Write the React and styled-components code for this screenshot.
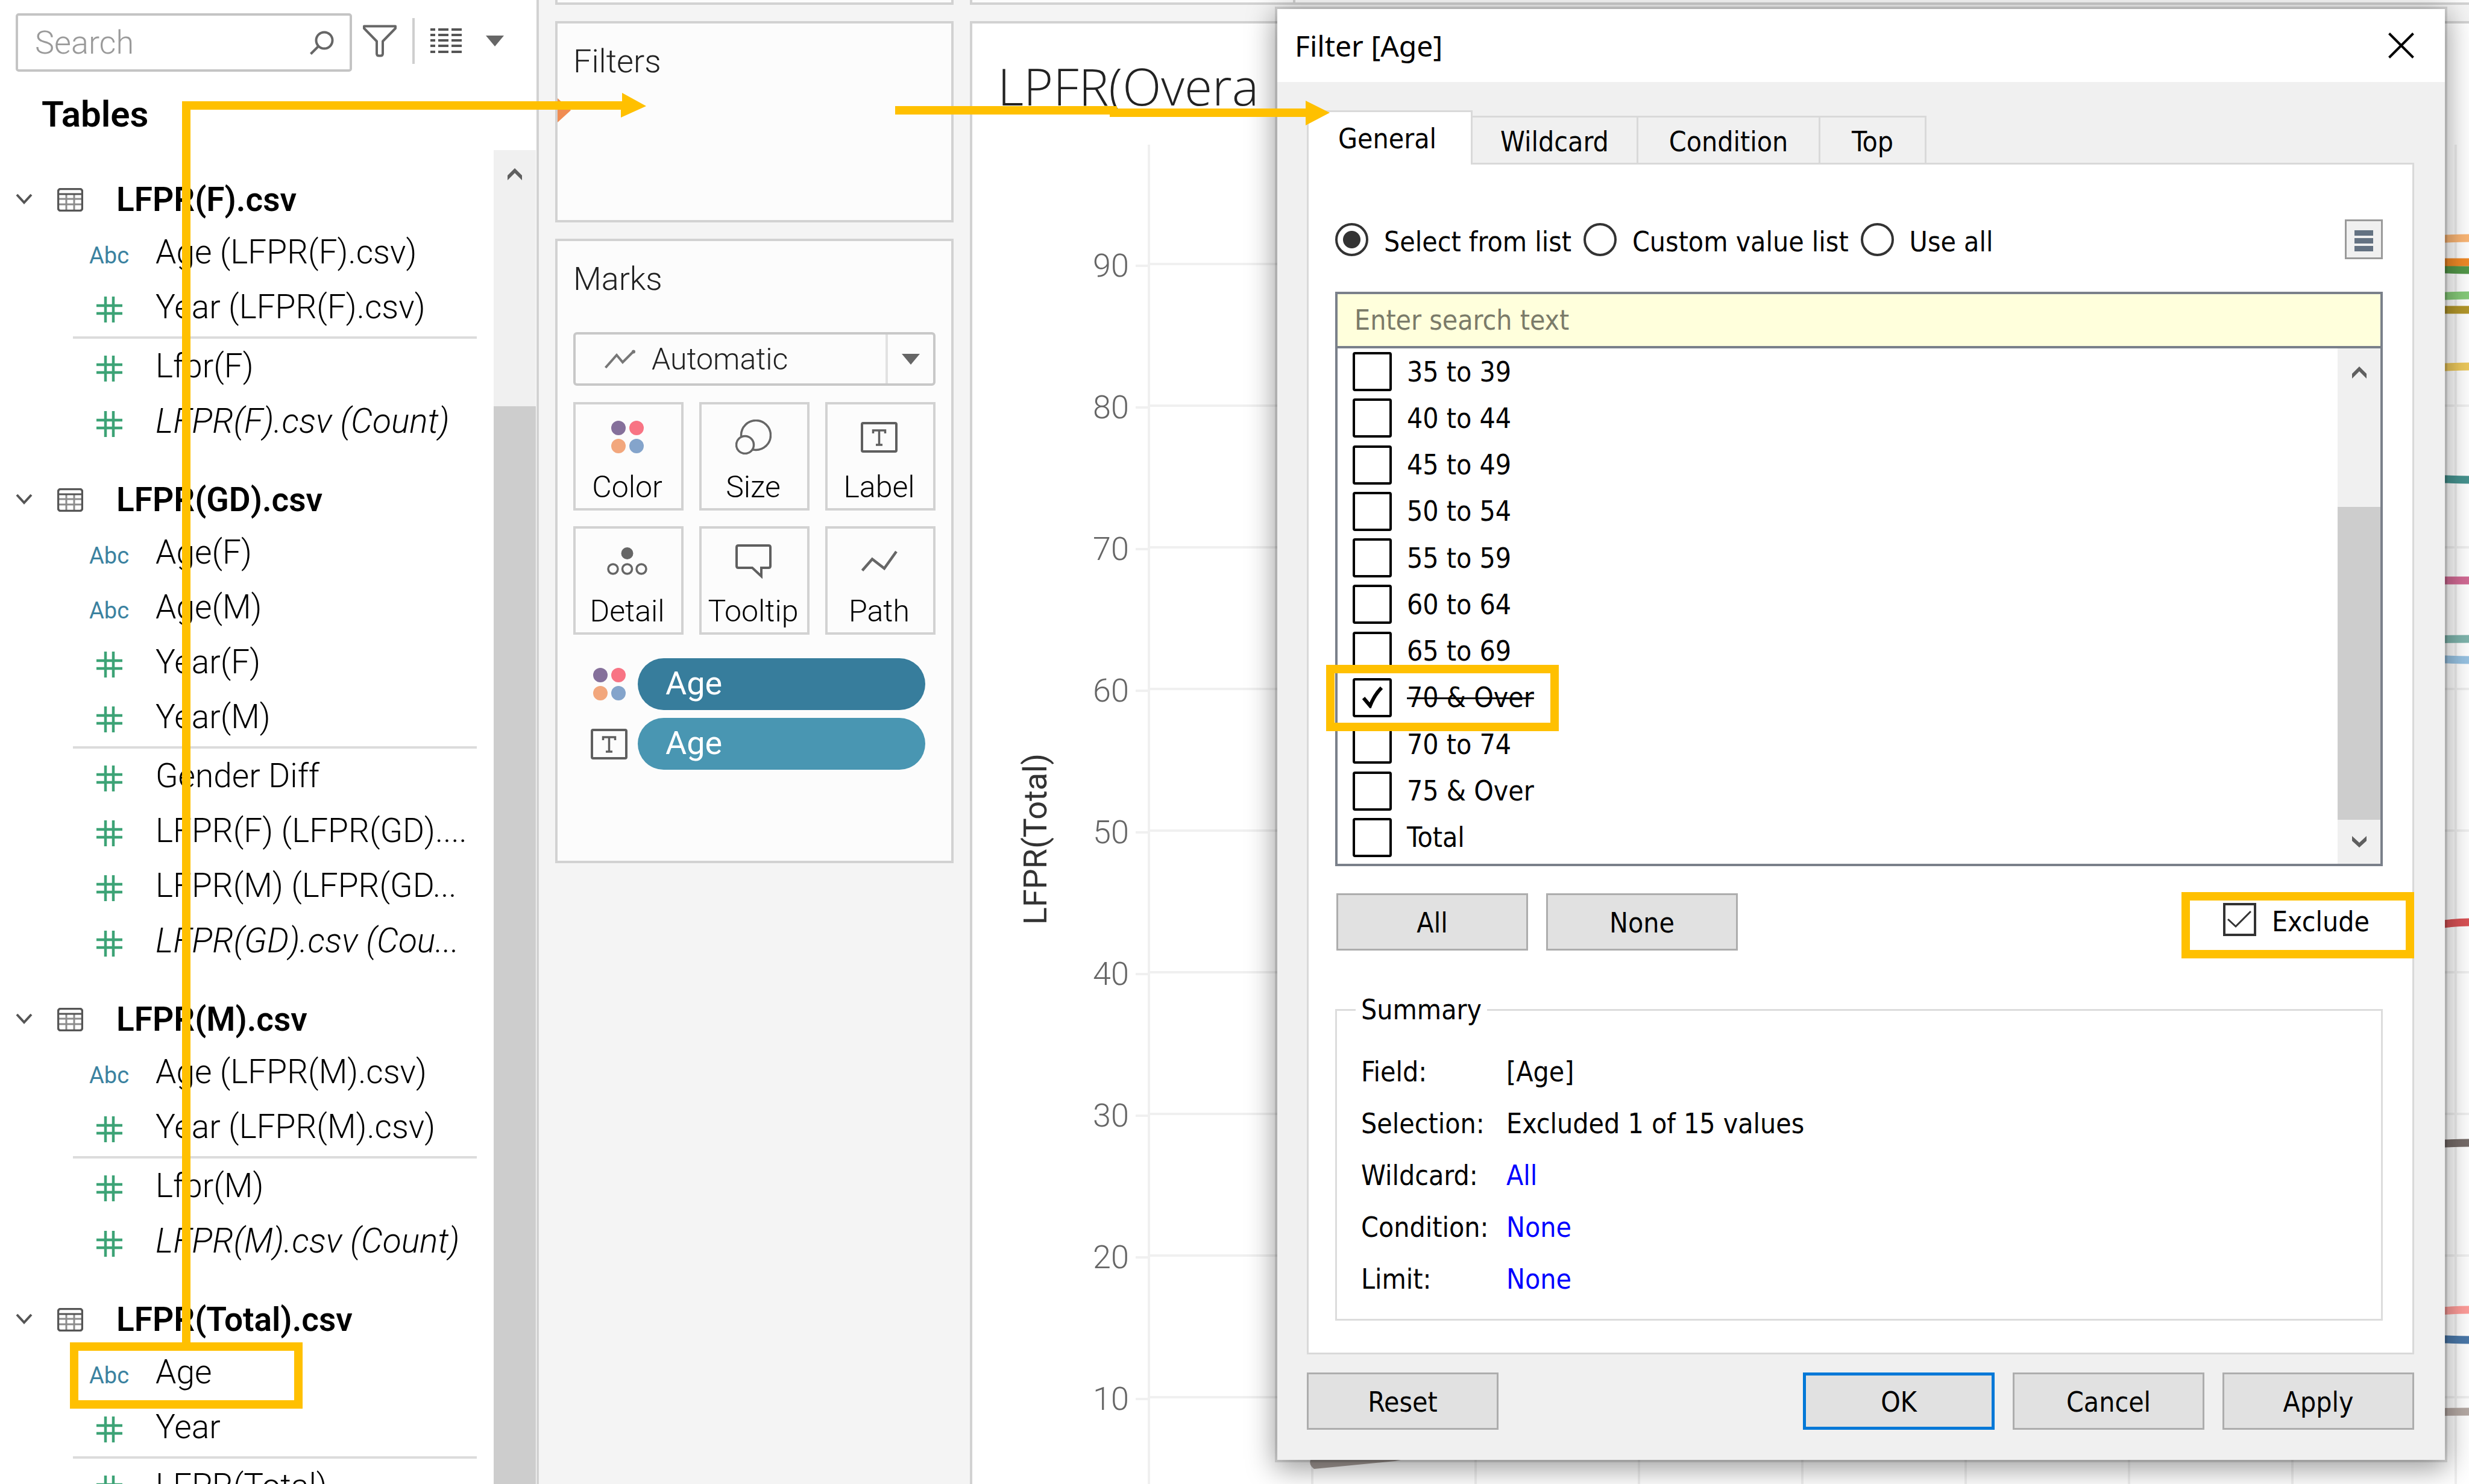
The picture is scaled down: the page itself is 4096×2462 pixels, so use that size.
import React from "react";
import styled, { createGlobalStyle, css } from "styled-components";

const ui = `Roboto, "Liberation Sans", sans-serif`;
const dialogFont = `"DejaVu Sans Condensed", "DejaVu Sans", sans-serif`;
const titleFont = `"Noto Sans", "Open Sans", sans-serif`;
const amber = "#ffc000";

const GlobalStyle = createGlobalStyle`
  *, *::before, *::after { box-sizing: border-box; }
  body { margin: 0; background: #f4f4f4; overflow: hidden; }
  button, input, select { font: inherit; color: inherit; margin: 0; }
`;

const Workspace = styled.div`
  position: relative;
  display: flex;
  height: 100vh;
  overflow: hidden;
  font-family: ${ui};
  font-weight: 300;
  color: #000;
`;

/* ---------- data pane ---------- */

const Sidebar = styled.aside`
  flex: 0 0 894px;
  min-width: 0;
  display: flex;
  flex-direction: column;
  background: #fff;
  border-right: 4px solid #d2d2d2;
`;

const Toolbar = styled.div`
  display: flex;
  align-items: flex-start;
  padding: 22px 0 0 26px;
`;

const SearchBox = styled.label`
  flex: 0 0 558px;
  min-width: 0;
  display: flex;
  align-items: center;
  height: 97px;
  padding: 0 26px 0 28px;
  border: 4px solid #c4c4c4;
  border-radius: 5px;
`;

const SearchInput = styled.input`
  flex: 1;
  width: 100%;
  min-width: 0;
  padding: 0;
  border: 0;
  outline: 0;
  background: none;
  font-size: 54px;
  &::placeholder { color: #9a9a9a; opacity: 1; }
`;

const ToolButton = styled.button`
  display: flex;
  align-items: center;
  height: 92px;
  padding: 0;
  margin-left: ${(p) => p.$gap}px;
  border: 0;
  background: none;
`;

const ToolDivider = styled.span`
  width: 4px;
  height: 76px;
  margin: 8px 0 0 25px;
  background: #cfcfcf;
`;

const PaneTitle = styled.h2`
  margin: 38px 0 26px 69px;
  font-size: 60px;
  line-height: 66px;
  font-weight: 600;
`;

const Scroller = styled.div`
  flex: 1;
  min-height: 0;
  display: flex;
  overflow: hidden;
`;

const Tree = styled.div`
  flex: 1;
  min-width: 0;
  padding-top: 40px;
`;

const Group = styled.section`
  margin-bottom: 43px;
`;

const GroupHead = styled.h3`
  display: flex;
  align-items: center;
  height: 84px;
  margin: 0;
  padding-left: 26px;
  font-size: 55px;
  font-weight: 600;
  white-space: nowrap;
`;

const GroupName = styled.span`
  margin-left: 55px;
`;

const FieldRow = styled.div`
  position: relative;
  display: flex;
  align-items: baseline;
  height: 91px;
  padding-left: 148px;
  font-size: ${(p) => (p.$italic ? 57 : 55)}px;
  line-height: 91px;
  white-space: nowrap;
  font-style: ${(p) => (p.$italic ? "italic" : "normal")};
`;

const FieldType = styled.span`
  flex: 0 0 66px;
  margin-right: 44px;
  text-align: center;
  font-size: 38px;
  font-style: normal;
  font-weight: 400;
  color: #3b82a0;
`;

const Rule = styled.hr`
  height: 4px;
  margin: 3px 28px 0 121px;
  border: 0;
  background: #dcdcdc;
`;

const ScrollTrack = styled.div`
  flex: 0 0 ${(p) => p.$w}px;
  display: flex;
  flex-direction: column;
  align-items: center;
  margin-right: ${(p) => p.$inset || 0}px;
  background: #f0f0f0;
`;

const ScrollArrow = styled.span`
  height: ${(p) => p.$h}px;
  display: flex;
  align-items: center;
`;

const ScrollThumb = styled.div`
  width: 100%;
  flex: 1;
  background: #cdcdcd;
`;

/* ---------- highlight frame ---------- */

const Highlight = styled.span`
  position: absolute;
  left: ${(p) => p.$l}px;
  top: ${(p) => p.$t}px;
  width: ${(p) => p.$w}px;
  height: 110px;
  border: 14px solid ${amber};
  pointer-events: none;
  z-index: 2;
`;

/* ---------- cards column ---------- */

const Shelves = styled.div`
  flex: 0 0 688px;
  display: flex;
  flex-direction: column;
  gap: 27px;
  padding-left: 27px;
`;

const Card = styled.section`
  position: relative;
  border: 4px solid #d2d2d2;
  background: #fcfcfc;
  padding: 30px 26px 0;
  height: ${(p) => p.$h}px;
`;

const CardEnd = styled.div`
  height: 8px;
  border: 4px solid #d2d2d2;
  border-top: 0;
  background: #fcfcfc;
`;

const CardTitle = styled.h2`
  margin: 0;
  font-size: 54px;
  line-height: 66px;
  font-weight: 300;
  color: #222;
`;

const DropMark = styled.span`
  position: absolute;
  left: 0;
  top: 124px;
  border-left: 22px solid #f08c52;
  border-top: 20px solid transparent;
  border-bottom: 20px solid transparent;
`;

const MarkSelectBox = styled.div`
  display: grid;
  align-items: center;
  height: 89px;
  margin: 55px 0 27px;
  border: 4px solid #c8c8c8;
  border-radius: 6px;
  color: #222;
  > * { grid-area: 1 / 1; }
  > svg { margin-left: 48px; pointer-events: none; }
`;

const MarkSelect = styled.select`
  appearance: none;
  width: 100%;
  height: 81px;
  padding: 0 0 0 126px;
  border: 0;
  outline: 0;
  background: none;
  font-size: 50px;
`;

const MarkCaret = styled.span`
  justify-self: end;
  display: flex;
  align-items: center;
  justify-content: center;
  width: 79px;
  height: 81px;
  border-left: 4px solid #e2e2e2;
  pointer-events: none;
`;

const MarkGrid = styled.div`
  display: grid;
  grid-template-columns: repeat(3, 1fr);
  gap: 26px;
`;

const MarkButton = styled.button`
  display: flex;
  flex-direction: column;
  align-items: center;
  gap: 21px;
  height: 180px;
  padding: 22px 4px 0 0;
  border: 4px solid #d2d2d2;
  background: #fcfcfc;
  font-size: 50px;
  line-height: 60px;
  font-weight: 300;
`;

const IconBox = styled.span`
  flex: 0 0 64px;
  display: flex;
  align-items: center;
  justify-content: center;
`;

const Pills = styled.div`
  display: grid;
  gap: 13px;
  margin: 39px 17px 0 29px;
`;

const PillRow = styled.div`
  display: flex;
  align-items: center;
  gap: 17px;
`;

const PillIcon = styled.span`
  flex: 0 0 61px;
  display: flex;
  justify-content: center;
`;

const Pill = styled.button`
  flex: 1;
  height: 86px;
  padding: 0 46px 4px;
  border: 0;
  border-radius: 43px;
  background: ${(p) => p.$bg};
  color: #fff;
  font-size: 54px;
  font-weight: 400;
  text-align: left;
`;

/* ---------- view ---------- */

const View = styled.main`
  flex: 1;
  min-width: 0;
  display: flex;
  flex-direction: column;
  gap: 27px;
  padding-left: 27px;
`;

const ShelfEnd = styled.div`
  height: 8px;
  padding-left: 532px;
  border: solid #d2d2d2;
  border-width: 0 0 4px 4px;
  background: #fcfcfc;
  &::before { content: ""; display: block; width: 4px; height: 4px; background: #d2d2d2; }
`;

const Sheet = styled.section`
  flex: 1;
  min-height: 0;
  display: flex;
  flex-direction: column;
  border: solid #d2d2d2;
  border-width: 4px 0 0 4px;
  background: #fff;
  overflow: hidden;
`;

const SheetTitle = styled.h1`
  margin: 54px 0 47px 42px;
  font-family: "Open Sans", "Noto Sans", sans-serif;
  font-size: 84px;
  line-height: 100px;
  font-weight: 300;
  color: #222;
  white-space: nowrap;
`;

const Plot = styled.div`
  flex: 1;
  min-height: 0;
  display: flex;
  align-items: flex-start;
`;

const AxisTitle = styled.div`
  flex: 0 0 64px;
  margin: 1010px 0 0 73px;
  writing-mode: vertical-rl;
  transform: rotate(180deg);
  font-size: 54px;
  line-height: 64px;
  font-weight: 400;
  color: #333;
  white-space: nowrap;
`;

const Ticks = styled.div`
  flex: 0 0 123px;
  padding-top: 83px;
`;

const Tick = styled.div`
  height: 235px;
  line-height: 235px;
  text-align: right;
  font-size: 54px;
  color: #666;
`;

const Canvas = styled.svg`
  flex: 1;
  min-width: 0;
  height: 100%;
  margin-left: 11px;
`;

/* ---------- dialog ---------- */

const Dialog = styled.div`
  position: absolute;
  left: 2119px;
  right: 40px;
  top: 15px;
  background: #f0f0f0;
  font-family: ${dialogFont};
  font-size: 46px;
  line-height: 54px;
  font-weight: 400;
  box-shadow: 0 0 0 4px rgba(0, 0, 0, 0.12), 0 10px 44px 4px rgba(0, 0, 0, 0.4);
`;

const TitleBar = styled.header`
  display: flex;
  align-items: center;
  justify-content: space-between;
  height: 121px;
  padding: 0 51px 0 29px;
  background: #fff;
  font-family: ${titleFont};
  font-size: 48px;
`;

const CloseButton = styled.button`
  display: flex;
  padding: 0;
  border: 0;
  background: none;
`;

const DialogBody = styled.div`
  padding: 47px 51px 50px 49px;
`;

const Tabs = styled.div`
  display: flex;
  align-items: flex-end;
`;

const Tab = styled.button`
  width: ${(p) => p.$w}px;
  height: 78px;
  padding: 4px 0 0;
  border: solid #d9d9d9;
  border-width: 3px 3px 0 0;
  background: #f0f0f0;
  ${(p) =>
    p.$active &&
    css`
      height: 90px;
      margin-bottom: -3px;
      padding: 0 8px 0 0;
      border-left-width: 3px;
      background: #fff;
      position: relative;
    `}
`;

const Panel = styled.div`
  padding: 91px 49px 53px 44px;
  border: 3px solid #d9d9d9;
  background: #fff;
`;

const ModeRow = styled.div`
  display: flex;
  align-items: center;
  gap: 20px;
  height: 66px;
  margin-bottom: 54px;
`;

const Choice = styled.label`
  position: relative;
  display: flex;
  align-items: center;
  gap: 26px;
  white-space: nowrap;
`;

const ChoiceText = styled.span`
  padding-top: 8px;
`;

const Radio = styled.input`
  appearance: none;
  width: 55px;
  height: 55px;
  border: 4px solid #333;
  border-radius: 50%;
  background: #fff;
  &:checked { background: radial-gradient(circle, #333 14px, #fff 15px); }
`;

const ListMenu = styled.button`
  display: flex;
  flex-direction: column;
  align-items: center;
  justify-content: center;
  gap: 4px;
  width: 63px;
  height: 66px;
  margin-left: auto;
  padding: 4px 0 0;
  border: 3px solid #9a9a9a;
  background: #f0f0f0;
`;

const MenuBar = styled.span`
  width: 31px;
  height: 9px;
  background: #647282;
`;

const ListBox = styled.div`
  border: 4px solid #7a808a;
`;

const ListSearch = styled.input`
  display: block;
  width: 100%;
  height: 90px;
  padding: 0 28px;
  border: 0;
  border-bottom: 4px solid #7a808a;
  outline: 0;
  background: #ffffdc;
  &::placeholder { color: #7b7b69; opacity: 1; }
`;

const ListBody = styled.div`
  display: flex;
  height: 855px;
`;

const Options = styled.div`
  flex: 1;
  display: flex;
  flex-direction: column;
  padding-bottom: 5px;
`;

const Option = styled.label`
  position: relative;
  flex: 1;
  display: flex;
  align-items: center;
  gap: 25px;
  padding-left: 25px;
  text-decoration: ${(p) => (p.$struck ? "line-through" : "none")};
  text-decoration-thickness: 3px;
`;

const CheckCell = styled.span`
  display: grid;
  place-items: center;
  > * { grid-area: 1 / 1; }
  > svg { pointer-events: none; }
`;

const Check = styled.input`
  appearance: none;
  width: ${(p) => p.$size}px;
  height: ${(p) => p.$size}px;
  border: 4px solid ${(p) => p.$color || "#000"};
  border-radius: ${(p) => (p.$square ? 0 : 4)}px;
  background: #fff;
`;

const ListActions = styled.div`
  display: flex;
  gap: 30px;
  margin: 45px 0 71px 2px;
`;

const PushButton = styled.button`
  width: 318px;
  height: 95px;
  padding: 2px 0 0;
  border: ${(p) => (p.$primary ? "5px solid #0078d7" : "3px solid #adadad")};
  background: #e1e1e1;
`;

const ExcludeSlot = styled.div`
  display: flex;
  align-items: center;
  height: 86px;
  margin: 0 22px 0 auto;
`;

const Summary = styled.fieldset`
  margin: 0;
  padding: 33px 40px 23px;
  border: 3px solid #dcdcdc;
`;

const Legend = styled.legend`
  margin-left: -9px;
  padding: 0 9px;
`;

const Facts = styled.dl`
  display: grid;
  grid-template-columns: 241px 1fr;
  grid-auto-rows: 86px;
  align-items: center;
  margin: 0;
`;

const Term = styled.dt`
  white-space: nowrap;
`;

const Detail = styled.dd`
  margin: 0;
  a { color: #00f; text-decoration: none; }
`;

const Footer = styled.footer`
  display: flex;
  gap: 30px;
  margin: 30px 0 0;
  > :first-child { margin-right: auto; }
`;

const Arrows = styled.svg`
  position: absolute;
  left: 0;
  top: 0;
  width: 2300px;
  height: 2240px;
  pointer-events: none;
`;

/* ---------- icons ---------- */

const Magnifier = () => (
  <svg width="40" height="40" viewBox="0 0 40 40" fill="none" stroke="#666" strokeWidth="4" style={{ flexShrink: 0 }}>
    <circle cx="24" cy="16" r="13.5" />
    <path d="M14.5 25.5 1.5 38.5" />
  </svg>
);
const Funnel = () => (
  <svg width="58" height="54" viewBox="0 0 58 54" fill="none" stroke="#666" strokeWidth="4" strokeLinejoin="round">
    <path d="M3 2.5H55V6L34 27.5V48Q34 51.500 30 51.500H28Q24 51.500 24 48V27.500L3 6Z" />
  </svg>
);
const ListGrid = () => (
  <svg width="52" height="42" viewBox="0 0 52 42" fill="#555">
    {[0, 9, 18, 27, 37].map((y) => (
      <path key={y} d={`M0 ${y}h8v4H0zM13 ${y}h17v4H13zM35 ${y}h17v4H35z`} />
    ))}
  </svg>
);
const Caret = () => (
  <svg width="30" height="18" viewBox="0 0 30 18"><path d="M0 0H30L15 18Z" fill="#666" /></svg>
);
const Chevron = () => (
  <svg width="28" height="20" viewBox="0 0 28 20" fill="none" stroke="#555" strokeWidth="4">
    <path d="M2 2 14 15 26 2" />
  </svg>
);
const ScrollChevron = ({ down }) => (
  <svg width="24" height="20" viewBox="0 0 24 20" fill="#5f5f5f">
    <path d={down ? "M0 0 12 11 24 0V8L12 19 0 8Z" : "M0 20 12 8 24 20V12L12 0 0 12Z"} />
  </svg>
);
const TableIcon = () => (
  <svg width="43" height="39" viewBox="0 0 43 39" fill="none" style={{ marginLeft: 41 }}>
    <path d="M3 18H40M3 27H40M15 11V36M28 11V36" stroke="#8c8c8c" strokeWidth="3" />
    <rect x="1.500" y="1.500" width="40" height="36" rx="4" stroke="#555" strokeWidth="3.500" />
    <path d="M2 10H41" stroke="#555" strokeWidth="3" />
  </svg>
);
const HashIcon = () => (
  <svg width="43" height="43" viewBox="0 0 43 43" stroke="#3da376" strokeWidth="4.500" style={{ verticalAlign: -7 }}>
    <path d="M15 0V43M28 0V43M0 15H43M0 28H43" />
  </svg>
);
const Dots = () => (
  <svg width="54" height="54" viewBox="0 0 54 54">
    <circle cx="12" cy="12" r="12" fill="#85709b" />
    <circle cx="42" cy="12" r="12" fill="#f87484" />
    <circle cx="12" cy="42" r="12" fill="#f2a77d" />
    <circle cx="42" cy="42" r="12" fill="#84a4cb" />
  </svg>
);
const SizeIcon = () => (
  <svg width="60" height="58" viewBox="0 0 60 58" fill="#fcfcfc" stroke="#666" strokeWidth="3.500">
    <circle cx="34" cy="26" r="24.500" />
    <circle cx="16" cy="42" r="14.500" />
  </svg>
);
const TextIcon = () => (
  <svg width="61" height="51" viewBox="0 0 61 51" fill="none" stroke="#5f5f5f">
    <rect x="2" y="2" width="57" height="47" rx="2" strokeWidth="4" />
    <path d="M20.500 19V14H40.500V19M30.500 14V38M25 38H36" strokeWidth="3.500" />
  </svg>
);
const DetailIcon = () => (
  <svg width="67" height="46" viewBox="0 0 67 46" fill="none" stroke="#666" strokeWidth="3.500">
    <circle cx="33.500" cy="10" r="10" fill="#666" stroke="none" />
    <circle cx="10" cy="36" r="8" />
    <circle cx="33.500" cy="36" r="8" />
    <circle cx="57" cy="36" r="8" />
  </svg>
);
const TooltipIcon = () => (
  <svg width="60" height="57" viewBox="0 0 60 57" fill="none" stroke="#5f5f5f" strokeWidth="4">
    <path d="M5 2H55Q58 2 58 5V36Q58 39 55 39H43V53L28 39H5Q2 39 2 36V5Q2 2 5 2Z" />
  </svg>
);
const PathIcon = () => (
  <svg width="60" height="36" viewBox="0 0 60 36" fill="none" stroke="#666" strokeWidth="4.500">
    <path d="M1.500 33.500 18 14.500 38 30 58 2" />
  </svg>
);
const LineIcon = () => (
  <svg width="52" height="32" viewBox="0 0 52 32" fill="none" stroke="#777" strokeWidth="4">
    <path d="M1.500 30 20 9 30 21 47 4" />
    <circle cx="48" cy="3.500" r="3" fill="#777" stroke="none" />
  </svg>
);
const BoldTick = () => (
  <svg width="34" height="36" viewBox="0 0 34 36" fill="none" stroke="#000" strokeWidth="6">
    <path d="M2 19 13 32Q20 14 32 2" />
  </svg>
);
const ThinTick = () => (
  <svg width="40" height="30" viewBox="0 0 40 30" fill="none" stroke="#333" strokeWidth="3">
    <path d="M1 15 14 27 39 2" />
  </svg>
);

/* ---------- data ---------- */

const tables = [
  { name: "LFPR(F).csv", dims: [["Age (LFPR(F).csv)", "abc"], ["Year (LFPR(F).csv)"]], measures: [["Lfpr(F)"], ["LFPR(F).csv (Count)", "count"]] },
  {
    name: "LFPR(GD).csv",
    dims: [["Age(F)", "abc"], ["Age(M)", "abc"], ["Year(F)"], ["Year(M)"]],
    measures: [["Gender Diff"], ["LFPR(F) (LFPR(GD)...."], ["LFPR(M) (LFPR(GD..."], ["LFPR(GD).csv (Cou...", "count"]],
  },
  { name: "LFPR(M).csv", dims: [["Age (LFPR(M).csv)", "abc"], ["Year (LFPR(M).csv)"]], measures: [["Lfpr(M)"], ["LFPR(M).csv (Count)", "count"]] },
  { name: "LFPR(Total).csv", dims: [["Age", "abc", true], ["Year"]], measures: [["LFPR(Total)"]] },
];

const marks = [
  ["Color", Dots], ["Size", SizeIcon], ["Label", TextIcon],
  ["Detail", DetailIcon], ["Tooltip", TooltipIcon], ["Path", PathIcon],
];

const ages = ["35 to 39", "40 to 44", "45 to 49", "50 to 54", "55 to 59", "60 to 64", "65 to 69", "70 & Over", "70 to 74", "75 & Over", "Total"];
const excluded = "70 & Over";

const series = [
  [157, "#fbb675", -2], [206, "#53984a", 2], [195, "#f18a27", 0], [252, "#86cb79", -2], [274, "#b3972a", 0],
  [370, "#edc95c", -2], [554, "#46938f", 2], [723, "#d26a94", 0], [821, "#7fb5ad", -1], [853, "#98c3e3", 2],
  [1295, "#d95255", -5], [1658, "#766c69", -2], [1936, "#ff9d9a", -3], [1981, "#4a78a9", 2], [2103, "#b5a9a4", -1],
];

const summary = [
  ["Field:", "[Age]"], ["Selection:", "Excluded 1 of 15 values"], ["Wildcard:", "All", true], ["Condition:", "None", true], ["Limit:", "None", true],
];

const Field = ({ field: [name, kind, marked] }) => (
  <FieldRow $italic={kind === "count"}>
    <FieldType>{kind === "abc" ? "Abc" : <HashIcon />}</FieldType>
    {name}
    {marked && <Highlight $l={116} $t={-4} $w={386} />}
  </FieldRow>
);

const DataPane = () => (
  <Sidebar>
    <Toolbar>
      <SearchBox>
        <SearchInput type="text" placeholder="Search" aria-label="Search" />
        <Magnifier />
      </SearchBox>
      <ToolButton aria-label="Filter fields" $gap={17}><Funnel /></ToolButton>
      <ToolDivider />
      <ToolButton aria-label="View as list" $gap={26}><ListGrid /></ToolButton>
      <ToolButton aria-label="Options" $gap={40}><Caret /></ToolButton>
    </Toolbar>
    <PaneTitle>Tables</PaneTitle>
    <Scroller>
      <Tree>
        {tables.map((t) => (
          <Group key={t.name}>
            <GroupHead><Chevron /><TableIcon /><GroupName>{t.name}</GroupName></GroupHead>
            {t.dims.map((f) => <Field key={f[0]} field={f} />)}
            <Rule />
            {t.measures.map((f) => <Field key={f[0]} field={f} />)}
          </Group>
        ))}
      </Tree>
      <ScrollTrack $w={70} $inset={1}>
        <ScrollArrow $h={79}><ScrollChevron /></ScrollArrow>
        <ScrollArrow $h={346} />
        <ScrollThumb />
      </ScrollTrack>
    </Scroller>
  </Sidebar>
);

const MarksColumn = () => (
  <Shelves>
    <CardEnd />
    <Card $h={334}>
      <CardTitle>Filters</CardTitle>
      <DropMark />
    </Card>
    <Card $h={1036}>
      <CardTitle>Marks</CardTitle>
      <MarkSelectBox>
        <LineIcon />
        <MarkSelect aria-label="Mark type" defaultValue="Automatic"><option>Automatic</option></MarkSelect>
        <MarkCaret><Caret /></MarkCaret>
      </MarkSelectBox>
      <MarkGrid>
        {marks.map(([label, Icon]) => (
          <MarkButton key={label}><IconBox><Icon /></IconBox>{label}</MarkButton>
        ))}
      </MarkGrid>
      <Pills>
        <PillRow><PillIcon><Dots /></PillIcon><Pill $bg="#377d9c">Age</Pill></PillRow>
        <PillRow><PillIcon><TextIcon /></PillIcon><Pill $bg="#4996b2">Age</Pill></PillRow>
      </Pills>
    </Card>
  </Shelves>
);

const Chart = () => (
  <View>
    <ShelfEnd />
    <Sheet>
      <SheetTitle>LPFR(Overa</SheetTitle>
      <Plot>
        <AxisTitle>LFPR(Total)</AxisTitle>
        <Ticks>
          {[90, 80, 70, 60, 50, 40, 30, 20, 10].map((v) => <Tick key={v}>{v}</Tick>)}
        </Ticks>
        <Canvas aria-hidden="true">
          <g stroke="#f0f0f0" strokeWidth="4">
            {Array.from({ length: 9 }, (_, i) => (
              <React.Fragment key={i}>
                <path d={`M0 ${201 + i * 235}H22`} />
                <path d={`M22 ${198 + i * 235}H2300`} />
              </React.Fragment>
            ))}
            {Array.from({ length: 9 }, (_, i) => <path key={i} d={`M${22 + i * 271} 0V2300`} />)}
          </g>
          <g fill="none" strokeWidth="13">
            {series.map(([y, color, drift]) => (
              <path key={y} stroke={color} d={`M2150 ${y}Q2190 ${y + drift} 2220 ${y + drift}`} />
            ))}
          </g>
          <path d="M290 2182 440 2182 430 2184 296 2197Q287 2190 290 2182Z" fill="#a39a96" />
        </Canvas>
      </Plot>
    </Sheet>
  </View>
);

const FilterDialog = () => (
  <Dialog role="dialog" aria-label="Filter [Age]">
    <TitleBar>
      Filter [Age]
      <CloseButton aria-label="Close">
        <svg width="43" height="43" viewBox="0 0 43 43" stroke="#000" strokeWidth="4"><path d="M1.500 1.500 41.500 41.500M41.500 1.500 1.500 41.500" /></svg>
      </CloseButton>
    </TitleBar>
    <DialogBody>
      <Tabs>
        <Tab $active $w={275}>General</Tab>
        <Tab $w={275}>Wildcard</Tab>
        <Tab $w={302}>Condition</Tab>
        <Tab $w={176}>Top</Tab>
      </Tabs>
      <Panel>
        <ModeRow>
          {["Select from list", "Custom value list", "Use all"].map((m, i) => (
            <Choice key={m}>
              <Radio type="radio" name="mode" defaultChecked={i === 0} />
              <ChoiceText>{m}</ChoiceText>
            </Choice>
          ))}
          <ListMenu aria-label="List options"><MenuBar /><MenuBar /><MenuBar /></ListMenu>
        </ModeRow>
        <ListBox>
          <ListSearch type="text" placeholder="Enter search text" aria-label="Enter search text" />
          <ListBody>
            <Options>
              {ages.map((a) => (
                <Option key={a} $struck={a === excluded}>
                  <CheckCell>
                    <Check type="checkbox" $size={65} defaultChecked={a === excluded} />
                    {a === excluded && <BoldTick />}
                  </CheckCell>
                  {a}
                  {a === excluded && <Highlight $l={-19} $t={-16} $w={386} />}
                </Option>
              ))}
            </Options>
            <ScrollTrack $w={71}>
              <ScrollArrow $h={79}><ScrollChevron /></ScrollArrow>
              <ScrollArrow $h={184} />
              <ScrollThumb />
              <ScrollArrow $h={73}><ScrollChevron down /></ScrollArrow>
            </ScrollTrack>
          </ListBody>
        </ListBox>
        <ListActions>
          <PushButton>All</PushButton>
          <PushButton>None</PushButton>
          <ExcludeSlot>
            <Choice>
              <CheckCell>
                <Check type="checkbox" $size={55} $square $color="#333" defaultChecked />
                <ThinTick />
              </CheckCell>
              <ChoiceText>Exclude</ChoiceText>
              <Highlight $l={-69} $t={-14} $w={386} />
            </Choice>
          </ExcludeSlot>
        </ListActions>
        <Summary>
          <Legend>Summary</Legend>
          <Facts>
            {summary.map(([term, value, link]) => (
              <React.Fragment key={term}>
                <Term>{term}</Term>
                <Detail>{link ? <a href="#filter">{value}</a> : value}</Detail>
              </React.Fragment>
            ))}
          </Facts>
        </Summary>
      </Panel>
      <Footer>
        <PushButton>Reset</PushButton>
        <PushButton $primary>OK</PushButton>
        <PushButton>Cancel</PushButton>
        <PushButton>Apply</PushButton>
      </Footer>
    </DialogBody>
  </Dialog>
);

export default function App() {
  return (
    <>
      <GlobalStyle />
      <Workspace>
        <DataPane />
        <MarksColumn />
        <Chart />
        <FilterDialog />
        <Arrows viewBox="0 0 2300 2240" fill={amber} aria-hidden="true">
          <path d="M302 168H1032V154L1072 176 1030 195V182H316V2232H302Z" />
          <path d="M1485 176H1853V180H2166V167L2206 187 2166 208V194H1841V190H1485Z" />
        </Arrows>
      </Workspace>
    </>
  );
}
